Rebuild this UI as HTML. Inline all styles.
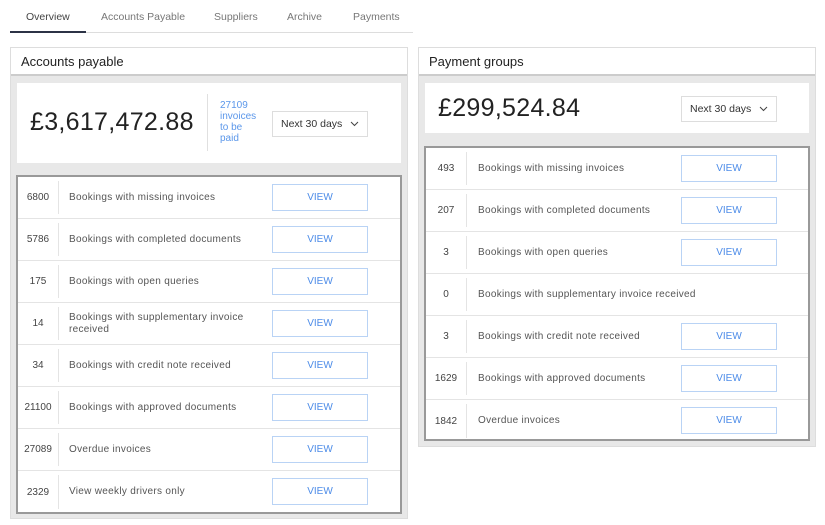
<html><head><style>
*{box-sizing:border-box;margin:0;padding:0}
body{width:825px;height:525px;background:#fff;font-family:"Liberation Sans",sans-serif;position:relative;overflow:hidden;color:#333}
.abs{position:absolute}
.tab{position:absolute;top:11px;font-size:10.5px;color:#777}
.panel{position:absolute;background:#e8e8e8;border:1px solid #ddd}
.ph{position:absolute;left:0;right:0;top:0;height:28px;background:#fff;border-bottom:2px solid #ccc;font-size:13px;color:#222;padding:6px 10px}
.card{position:absolute;background:#fff}
.amt{position:absolute;font-size:25px;color:#222;letter-spacing:.3px}
.dd{position:absolute;border:1px solid #ddd;background:#fff;font-size:10.5px;color:#333;padding:0 8px;display:flex;align-items:center;justify-content:space-between}
.tbl{position:absolute;background:#fff;border:2px solid #999}
.row{height:42px;border-bottom:1px solid #e4e4e4;position:relative;font-size:10px;color:#555}
.row:last-child{border-bottom:none}
.n{position:absolute;left:0;top:4px;bottom:4px;border-right:1px solid #e4e4e4;display:flex;align-items:center;justify-content:center;color:#444}
.l{position:absolute;top:0;bottom:0;display:flex;align-items:center;line-height:12px;letter-spacing:.3px}
.b{position:absolute;top:7px;width:96px;height:27px;border:1px solid #b9d3f5;color:#4d8ce8;font-size:10px;display:flex;align-items:center;justify-content:center}
</style></head><body>
<div class="tab" style="left:26px;color:#444">Overview</div>
<div class="tab" style="left:101px">Accounts Payable</div>
<div class="tab" style="left:214px">Suppliers</div>
<div class="tab" style="left:287px">Archive</div>
<div class="tab" style="left:353px">Payments</div>
<div class="abs" style="left:10px;top:32px;width:403px;height:1px;background:#ddd"></div>
<div class="abs" style="left:10px;top:31px;width:76px;height:2px;background:#2c3346"></div>

<div class="panel" style="left:10px;top:47px;width:398px;height:472px">
<div class="ph">Accounts payable</div>
<div class="card" style="left:6px;top:35px;width:384px;height:80px">
<div class="amt" style="left:13px;top:25px">£3,617,472.88</div>
<div class="abs" style="left:190px;top:11px;width:1px;height:57px;background:#e0e0e0"></div>
<div class="abs" style="left:203px;top:17px;font-size:10px;line-height:11px;color:#5b97ea">27109<br>invoices<br>to be<br>paid</div>
<div class="dd" style="left:255px;top:28px;width:96px;height:26px">Next 30 days <svg width="9" height="6"><path d="M1 1l3.5 3.5L8 1" stroke="#444" fill="none"/></svg></div>
</div>
<div class="tbl" style="left:5px;top:127px;width:386px;height:339px">
<div class="row"><div class="n" style="width:41px">6800</div><div class="l" style="left:51px">Bookings with missing invoices</div><div class="b" style="left:254px">VIEW</div></div>
<div class="row"><div class="n" style="width:41px">5786</div><div class="l" style="left:51px">Bookings with completed documents</div><div class="b" style="left:254px">VIEW</div></div>
<div class="row"><div class="n" style="width:41px">175</div><div class="l" style="left:51px">Bookings with open queries</div><div class="b" style="left:254px">VIEW</div></div>
<div class="row"><div class="n" style="width:41px">14</div><div class="l" style="left:51px">Bookings with supplementary invoice<br>received</div><div class="b" style="left:254px">VIEW</div></div>
<div class="row"><div class="n" style="width:41px">34</div><div class="l" style="left:51px">Bookings with credit note received</div><div class="b" style="left:254px">VIEW</div></div>
<div class="row"><div class="n" style="width:41px">21100</div><div class="l" style="left:51px">Bookings with approved documents</div><div class="b" style="left:254px">VIEW</div></div>
<div class="row"><div class="n" style="width:41px">27089</div><div class="l" style="left:51px">Overdue invoices</div><div class="b" style="left:254px">VIEW</div></div>
<div class="row"><div class="n" style="width:41px">2329</div><div class="l" style="left:51px">View weekly drivers only</div><div class="b" style="left:254px">VIEW</div></div>
</div>
</div>

<div class="panel" style="left:418px;top:47px;width:398px;height:400px">
<div class="ph">Payment groups</div>
<div class="card" style="left:6px;top:35px;width:384px;height:50px">
<div class="amt" style="left:13px;top:11px">£299,524.84</div>
<div class="dd" style="left:256px;top:13px;width:96px;height:26px">Next 30 days <svg width="9" height="6"><path d="M1 1l3.5 3.5L8 1" stroke="#444" fill="none"/></svg></div>
</div>
<div class="tbl" style="left:5px;top:98px;width:386px;height:295px">
<div class="row"><div class="n" style="width:41px">493</div><div class="l" style="left:52px">Bookings with missing invoices</div><div class="b" style="left:255px">VIEW</div></div>
<div class="row"><div class="n" style="width:41px">207</div><div class="l" style="left:52px">Bookings with completed documents</div><div class="b" style="left:255px">VIEW</div></div>
<div class="row"><div class="n" style="width:41px">3</div><div class="l" style="left:52px">Bookings with open queries</div><div class="b" style="left:255px">VIEW</div></div>
<div class="row"><div class="n" style="width:41px">0</div><div class="l" style="left:52px">Bookings with supplementary invoice received</div></div>
<div class="row"><div class="n" style="width:41px">3</div><div class="l" style="left:52px">Bookings with credit note received</div><div class="b" style="left:255px">VIEW</div></div>
<div class="row"><div class="n" style="width:41px">1629</div><div class="l" style="left:52px">Bookings with approved documents</div><div class="b" style="left:255px">VIEW</div></div>
<div class="row"><div class="n" style="width:41px">1842</div><div class="l" style="left:52px">Overdue invoices</div><div class="b" style="left:255px">VIEW</div></div>
</div>
</div>
</body></html>
